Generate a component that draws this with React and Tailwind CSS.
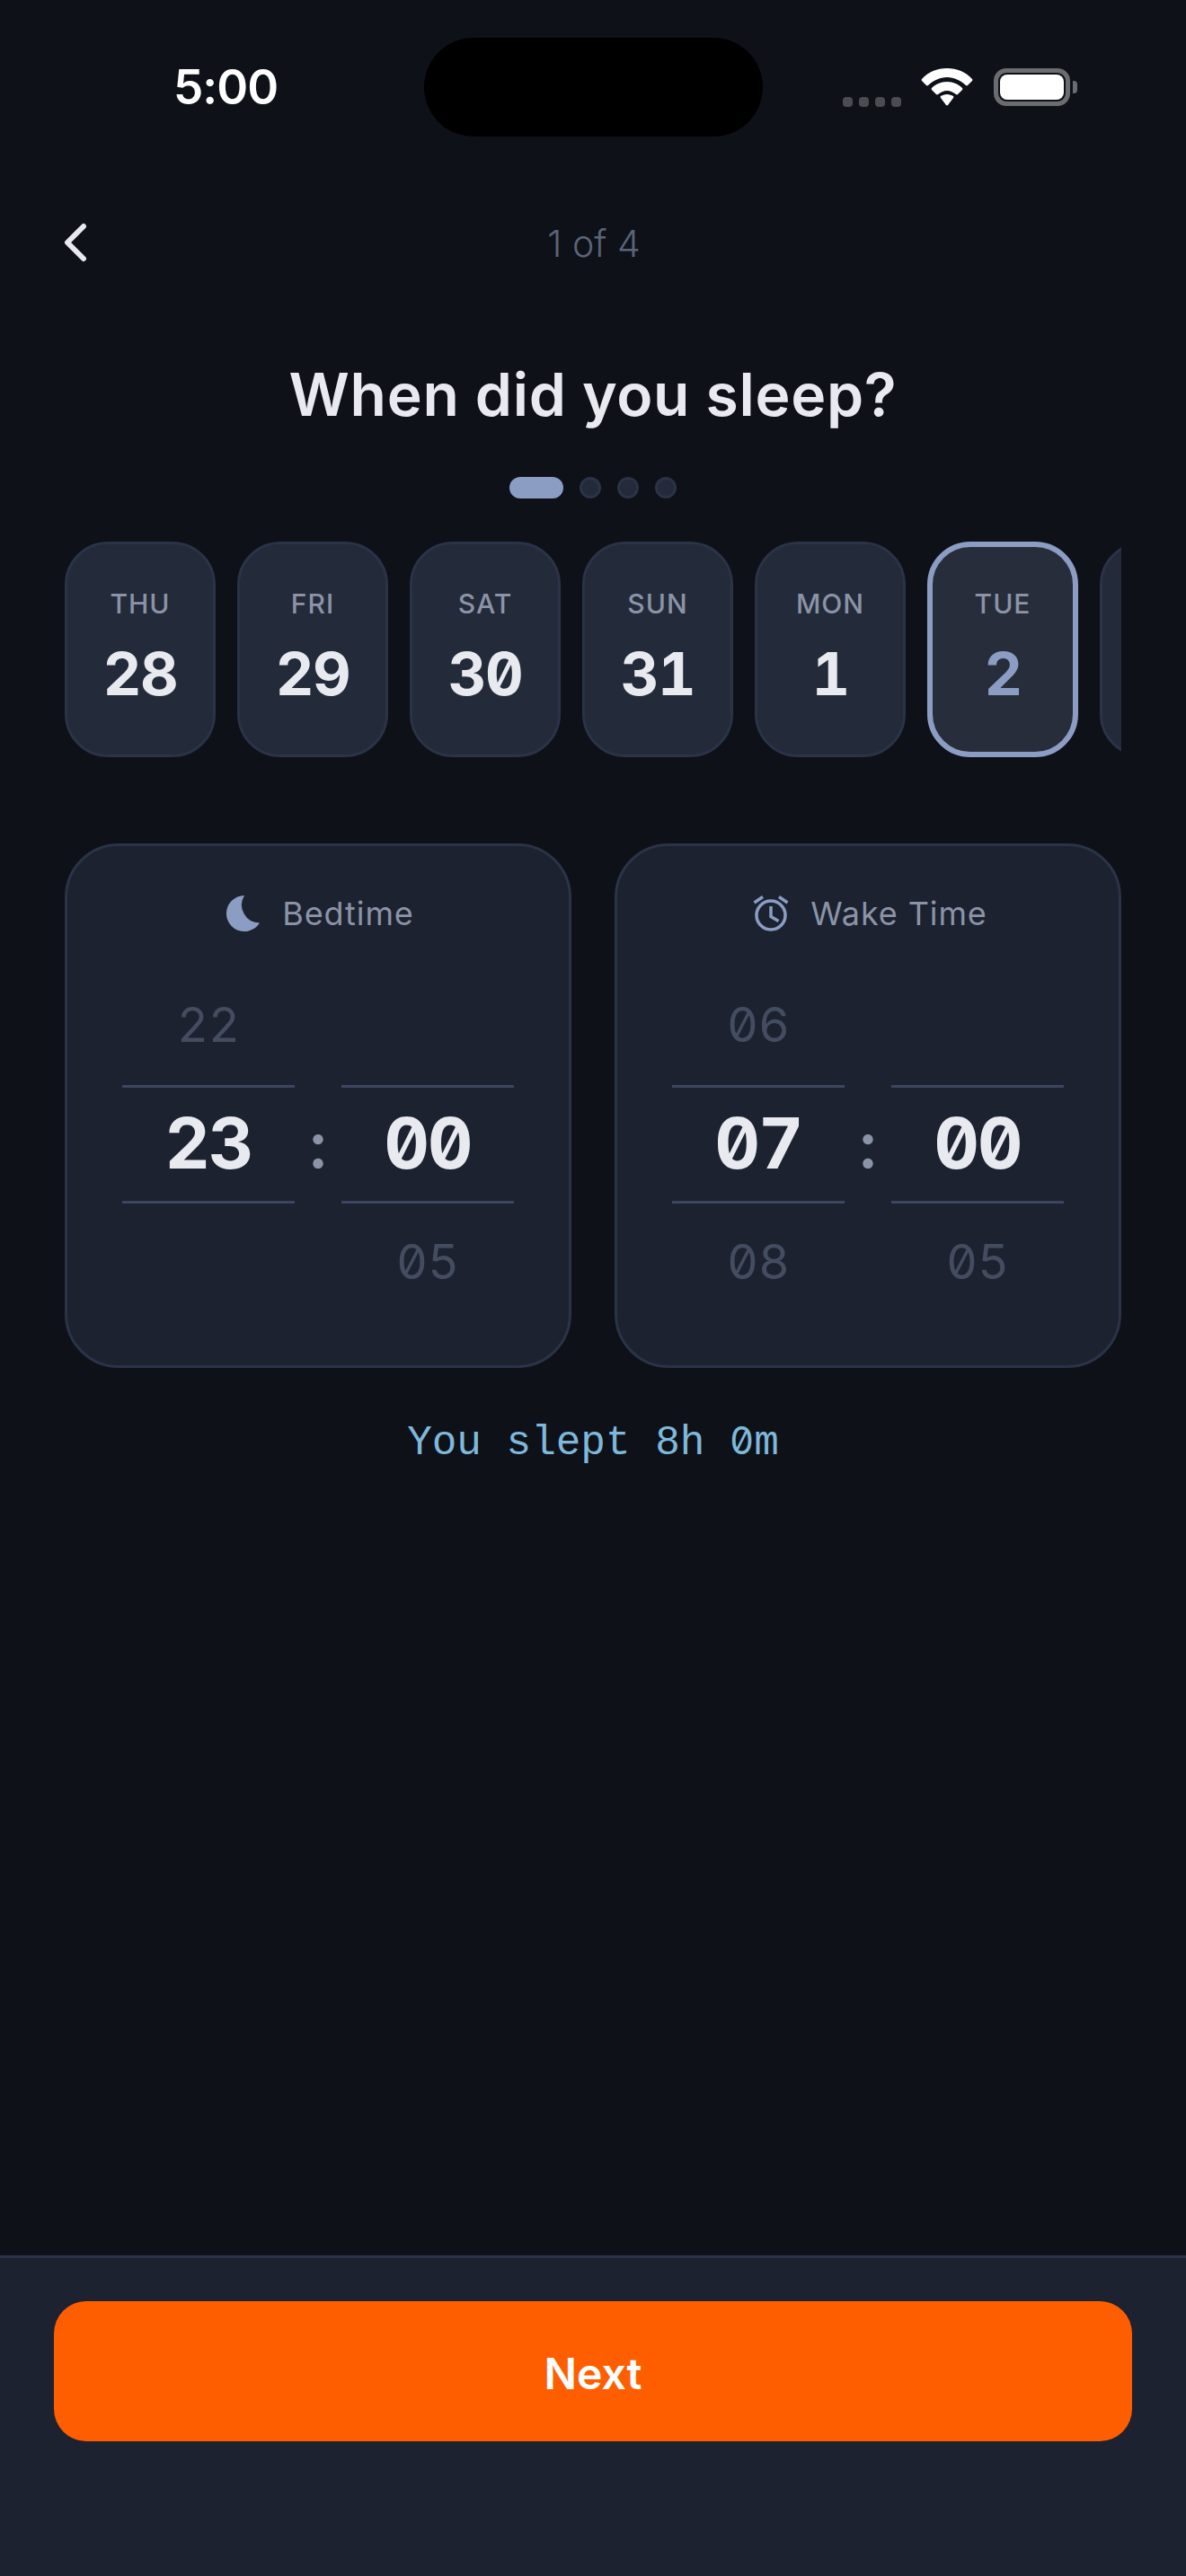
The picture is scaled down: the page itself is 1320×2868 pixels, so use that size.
const days = [
  { label: "THU", num: "28" },
  { label: "FRI", num: "29" },
  { label: "SAT", num: "30" },
  { label: "SUN", num: "31" },
  { label: "MON", num: "1" },
  { label: "TUE", num: "2", active: true },
  { label: "", num: "" }, // next card, cut off by the strip
];

const NUM = "font-['Inter',sans-serif] [font-variant-numeric:tabular-nums_slashed-zero]";

function StatusBar() {
  return (
    <div className="grid grid-cols-[1fr_377px_1fr] pt-[42px] h-[234px]">
      <div className="h-[110px] flex items-center pl-[193px] text-[53px] tracking-[-1px] leading-none font-semibold text-white">5:00</div>
      <div className="h-[110px] rounded-[55px] bg-black" />
      <div className="h-[110px] flex items-center pl-[89px]">
        <div className="flex gap-[7px] mt-[32px]">
          <div className="w-[11px] h-[11px] rounded-[4px] bg-[#4a4c50]" />
          <div className="w-[11px] h-[11px] rounded-[4px] bg-[#4a4c50]" />
          <div className="w-[11px] h-[11px] rounded-[4px] bg-[#4a4c50]" />
          <div className="w-[11px] h-[11px] rounded-[4px] bg-[#4a4c50]" />
        </div>
        <svg width="58" height="42" viewBox="0 0 58 42" className="ml-[22px]" fill="#fff">
          <path d="M29 0C18 0 8 4 1 12a1.500 1.500 0 0 0 0 2l5 5a1.500 1.500 0 0 0 2 0c5-5 13-9 21-9s16 4 21 9a1.500 1.500 0 0 0 2 0l5-5a1.500 1.500 0 0 0 0-2C50 4 40 0 29 0Z" />
          <path d="M29 15c-7 0-13 3-17 7a1.500 1.500 0 0 0 0 2l5 5a1.500 1.500 0 0 0 2 0c3-2 6-4 10-4s7 2 10 4a1.500 1.500 0 0 0 2 0l5-5a1.500 1.500 0 0 0 0-2c-4-4-10-7-17-7Z" />
          <path d="M29 29c-3 0-5 1-7 2a1.500 1.500 0 0 0 0 2l6 8a1.500 1.500 0 0 0 2 0l6-8a1.500 1.500 0 0 0 0-2c-2-1-4-2-7-2Z" />
        </svg>
        <div className="ml-[23px] w-[85px] h-[42px] rounded-[14px] border-[5px] border-[#6a6c70] p-[2px]">
          <div className="w-full h-full rounded-[8px] bg-white" />
        </div>
        <div className="ml-[3px] w-[5px] h-[14px] rounded-r-[4px] bg-[#6a6c70]" />
      </div>
    </div>
  );
}

function DayCard({ day }) {
  return (
    <div
      className={`shrink-0 w-[168px] h-[240px] rounded-[48px] flex flex-col items-center ${
        day.active ? "bg-[#282d3c] border-[6px] border-[#8b9dc3] pt-[45px]" : "bg-[#232a39] border-[3px] border-[#2a3347] pt-[48px]"
      }`}
    >
      <div className="h-[36px] text-[30px] leading-[36px] font-medium text-[#8b93a7] tracking-[1px]">{day.label}</div>
      <div className={`mt-[18px] h-[84px] text-[66px] leading-[84px] tracking-[-1.5px] font-bold ${NUM} ${day.active ? "text-[#8b9dc3]" : "text-[#e8eaf0]"}`}>
        {day.num}
      </div>
    </div>
  );
}

function WheelColumn({ prev, value, next }) {
  return (
    <div className={`w-[192px] flex flex-col items-center ${NUM}`}>
      <div className="h-[132px] flex items-center pb-[3px] text-[54px] text-[#444d60]">{prev}</div>
      <div className="w-full h-[132px] border-y-[3px] border-[#3d4660] flex items-center justify-center pb-[3px] text-[78px] tracking-[-2px] font-bold text-[#e8eaf0]">
        {value}
      </div>
      <div className="h-[132px] flex items-center pb-[3px] text-[54px] text-[#444d60]">{next}</div>
    </div>
  );
}

function TimeCard({ icon, label, hour, minute }) {
  return (
    <div className="flex-1 h-[584px] rounded-[60px] bg-[#1c2230] border-[3px] border-[#2a3347] pt-[48px]">
      <div className="h-[54px] flex items-center justify-center gap-[24px] pl-[5px] mb-[32px]">
        {icon}
        <span className="text-[36px] text-[#8b93a7] tracking-[0.9px]">{label}</span>
      </div>
      <div className="flex items-center justify-center">
        <WheelColumn {...hour} />
        <div className={`w-[52px] text-center text-[72px] font-semibold text-[#8b93a7] ${NUM}`}>:</div>
        <WheelColumn {...minute} />
      </div>
    </div>
  );
}

export default function App() {
  return (
    <div className="w-[1320px] h-[2868px] bg-[#0e1118] flex flex-col font-['Inter',sans-serif]">
      <StatusBar />

      {/* Top nav */}
      <div className="relative h-[72px] flex items-center justify-center">
        <svg width="72" height="72" viewBox="0 0 24 24" fill="none" stroke="#e8eaf0" strokeWidth="2" strokeLinecap="round" strokeLinejoin="round" className="absolute left-[48px] top-0">
          <path d="m15 18-6-6 6-6" />
        </svg>
        <span className="pt-[3px] pl-[2px] text-[41px] font-light text-[#5b6478]">1 of 4</span>
      </div>

      <h1 className="mt-[93px] text-center text-[66px] leading-[80px] font-semibold tracking-[0.7px] text-[#e8eaf0]">
        When did you sleep?
      </h1>

      <div className="mt-[52px] flex justify-center gap-[18px]">
        <div className="w-[60px] h-[24px] rounded-full bg-[#8b9dc3]" />
        <div className="w-[24px] h-[24px] rounded-full bg-[#232a39] border-[3px] border-[#2a3347]" />
        <div className="w-[24px] h-[24px] rounded-full bg-[#232a39] border-[3px] border-[#2a3347]" />
        <div className="w-[24px] h-[24px] rounded-full bg-[#232a39] border-[3px] border-[#2a3347]" />
      </div>

      {/* Date strip */}
      <div className="mt-[48px] mx-[72px] flex gap-[24px] overflow-hidden">
        {days.map((day, i) => (
          <DayCard key={i} day={day} />
        ))}
      </div>

      <div className="mt-[96px] mx-[72px] flex gap-[48px]">
        <TimeCard
          icon={
            <svg width="38" height="40" viewBox="0 0 38 40" fill="#8b9dc3">
              <path d="M20 0A20 20 0 1 0 37 30.500 20 20 0 0 1 20 0Z" />
            </svg>
          }
          label="Bedtime"
          hour={{ prev: "22", value: "23", next: "" }}
          minute={{ prev: "", value: "00", next: "05" }}
        />
        <TimeCard
          icon={
            <svg width="40" height="40" viewBox="0 0 40 40" fill="none" stroke="#8b9dc3" strokeWidth="3.500">
              <circle cx="20" cy="22" r="16" />
              <path d="M1.500 8 11 1.500M29 1.500 38.500 8M20 12v11.500l8.500 5" />
            </svg>
          }
          label="Wake Time"
          hour={{ prev: "06", value: "07", next: "08" }}
          minute={{ prev: "", value: "00", next: "05" }}
        />
      </div>

      <div className="mt-[54px] text-center text-[46px] leading-[54px] text-[#7eb8da] font-['Liberation_Mono',monospace]">
        You slept 8h <span className={`text-[42px] ${NUM}`}>0</span>m
      </div>

      {/* Footer */}
      <div className="mt-auto h-[357px] bg-[#1c2230] border-t-[3px] border-[#2a3347] px-[60px] pt-[48px]">
        <button className="w-full h-[156px] rounded-[36px] bg-[#ff5e00] text-white text-[48px] font-semibold pt-[5px]">Next</button>
      </div>
    </div>
  );
}
